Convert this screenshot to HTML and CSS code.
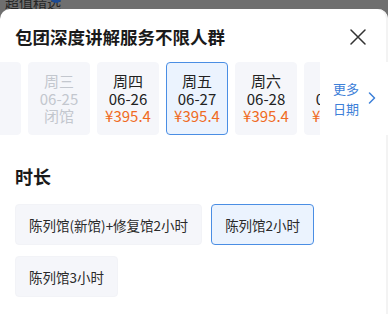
FILE: index.html
```html
<!DOCTYPE html>
<html lang="zh-CN">
<head>
<meta charset="utf-8">
<link rel="stylesheet" href="styles.css">
</head>
<body>
<div class="behind">
  <span class="behind-text">超值精选</span>
  <span class="behind-dot"></span>
</div>
<div class="sheet">
  <div class="header">
    <h1 class="title">包团深度讲解服务不限人群</h1>
    <svg class="close" width="16" height="16" viewBox="0 0 16 16"><path d="M1 1L15 15M15 1L1 15" stroke="#333" stroke-width="1.5" fill="none" stroke-linecap="round"/></svg>
  </div>
  <div class="dates">
    <div class="track">
      <div class="card"></div>
      <div class="card disabled"><span>周三</span><span>06-25</span><span>闭馆</span></div>
      <div class="card"><span>周四</span><span>06-26</span><span class="price">¥395.4</span></div>
      <div class="card selected"><span>周五</span><span>06-27</span><span class="price">¥395.4</span></div>
      <div class="card"><span>周六</span><span>06-28</span><span class="price">¥395.4</span></div>
      <div class="card"><span>周日</span><span>06-29</span><span class="price">¥395.4</span></div>
    </div>
    <div class="more">
      <span class="more-text">更多<br>日期</span>
      <svg class="chev" width="8" height="12" viewBox="0 0 8 12"><path d="M1.5 1L6.5 6L1.5 11" stroke="#3d80d8" stroke-width="1.5" fill="none" stroke-linecap="round" stroke-linejoin="round"/></svg>
    </div>
  </div>
  <h2 class="section">时长</h2>
  <div class="options">
    <div class="opt">陈列馆(新馆)+修复馆2小时</div>
    <div class="opt selected">陈列馆2小时</div>
    <div class="opt">陈列馆3小时</div>
  </div>
</div>
</body>
</html>
```
FILE: styles.css
```css
html, body {
  margin: 0;
  padding: 0;
}
body {
  width: 388px;
  height: 314px;
  overflow: hidden;
  background: #6f6f6f;
  font-family: "Noto Sans CJK SC", "Noto Sans", sans-serif;
  color: #1f1f1f;
}
.behind {
  position: relative;
  height: 9px;
  overflow: hidden;
  padding-left: 5px;
}
.behind-text {
  display: block;
  margin-top: -5px;
  font-size: 14px;
  line-height: 14px;
  color: #262626;
}
.behind-dot {
  position: absolute;
  left: 50px;
  top: -9px;
  width: 12px;
  height: 12px;
  border-radius: 50%;
  background: #1d4b94;
}
.sheet {
  height: 305px;
  background: #fff;
  border-radius: 10px 10px 0 0;
  box-shadow: inset -2px 0 0 #f3f3f3;
}
.header {
  display: flex;
  align-items: center;
  justify-content: space-between;
  padding: 16px 22px 0 15px;
}
.title {
  margin: 0;
  font-size: 17.5px;
  line-height: 24px;
  font-weight: 700;
  color: #1a1a1a;
}
.close {
  display: block;
}
.dates {
  position: relative;
  margin-top: 13px;
  height: 73px;
  overflow: hidden;
}
.track {
  display: flex;
  gap: 7px;
  margin-left: -41px;
}
.card {
  flex: 0 0 auto;
  box-sizing: border-box;
  width: 62px;
  height: 73px;
  border-radius: 4px;
  background: #f5f6fa;
  border: 1px solid #f5f6fa;
  display: flex;
  flex-direction: column;
  align-items: center;
  justify-content: center;
  font-size: 15px;
  line-height: 17.5px;
  color: #222;
}
.card.disabled {
  color: #c3c7ce;
}
.card.selected {
  background: #ebf3fe;
  border-color: #4a8ee4;
}
.price {
  color: #f06a22;
}
.more {
  position: absolute;
  top: 0;
  right: 0;
  bottom: 0;
  width: 68px;
  box-sizing: border-box;
  padding-left: 13px;
  background: #fff;
  display: flex;
  align-items: center;
}
.more-text {
  font-size: 13px;
  line-height: 20px;
  color: #3d80d8;
}
.chev {
  display: block;
  margin-left: 9px;
  margin-top: -2px;
}
.section {
  margin: 29px 0 0 15px;
  font-size: 18px;
  line-height: 24px;
  font-weight: 700;
  color: #1a1a1a;
}
.options {
  display: flex;
  flex-wrap: wrap;
  gap: 11px 9px;
  padding: 16px 15px 0;
}
.opt {
  box-sizing: border-box;
  height: 41px;
  padding: 0 13px;
  display: flex;
  align-items: center;
  border: 1px solid #f2f3f7;
  border-radius: 4px;
  background: #f5f6fa;
  font-size: 13.5px;
  color: #2a2a2a;
}
.opt.selected {
  background: #ebf3fe;
  border-color: #4a8ee4;
}
```
